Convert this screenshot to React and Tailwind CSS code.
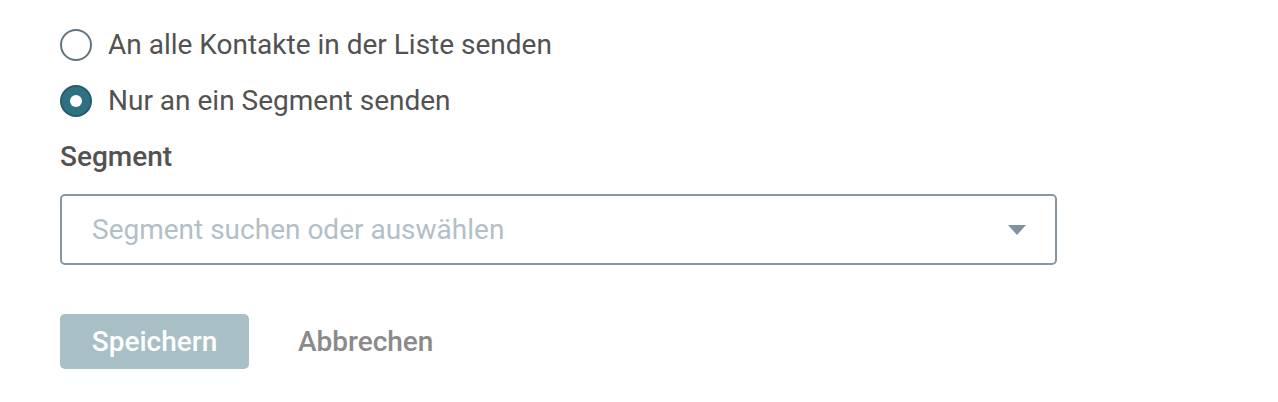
import React from "react";

export default function App() {
  return (
    <div className="w-[1278px] h-[402px] bg-white pl-[60px] pt-[29px]" style={{ fontFamily: "Roboto, 'Liberation Sans', sans-serif" }}>
      <div className="flex flex-col gap-[24px]">
        <label className="flex items-center h-[32px] gap-[16px]">
          <span className="w-[32px] h-[32px] rounded-full border-2 border-[#607583] bg-white"></span>
          <span className="text-[28px] leading-[32px] text-[#525252]">An alle Kontakte in der Liste senden</span>
        </label>
        <label className="flex items-center h-[32px] gap-[16px]">
          <span className="w-[32px] h-[32px] rounded-full border-2 border-[#255c6a] bg-[#2f7183] flex items-center justify-center">
            <span className="w-[12px] h-[12px] rounded-full bg-white"></span>
          </span>
          <span className="text-[28px] leading-[32px] text-[#525252]">Nur an ein Segment senden</span>
        </label>
      </div>
      <div className="mt-[24px] text-[28px] font-medium text-[#525252] leading-[32px]">Segment</div>
      <div className="mt-[21px] w-[997px] h-[71px] border-2 border-[#8797a2] rounded-[5px] flex items-center justify-between pl-[30px] pr-[29px]">
        <span className="text-[28px] leading-[32px] text-[#b3bfc7]">Segment suchen oder auswählen</span>
        <svg width="18" height="10" viewBox="0 0 18 10">
          <path d="M0 0 L18 0 L9 10 Z" fill="#7f929e" />
        </svg>
      </div>
      <div className="mt-[49px] flex items-center gap-[49px]">
        <button className="w-[189px] h-[55px] rounded-[5px] bg-[#a7bfc5] text-white text-[28px] leading-[32px] font-medium">Speichern</button>
        <button className="text-[28px] leading-[32px] font-medium text-[#8a8a8a]">Abbrechen</button>
      </div>
    </div>
  );
}
